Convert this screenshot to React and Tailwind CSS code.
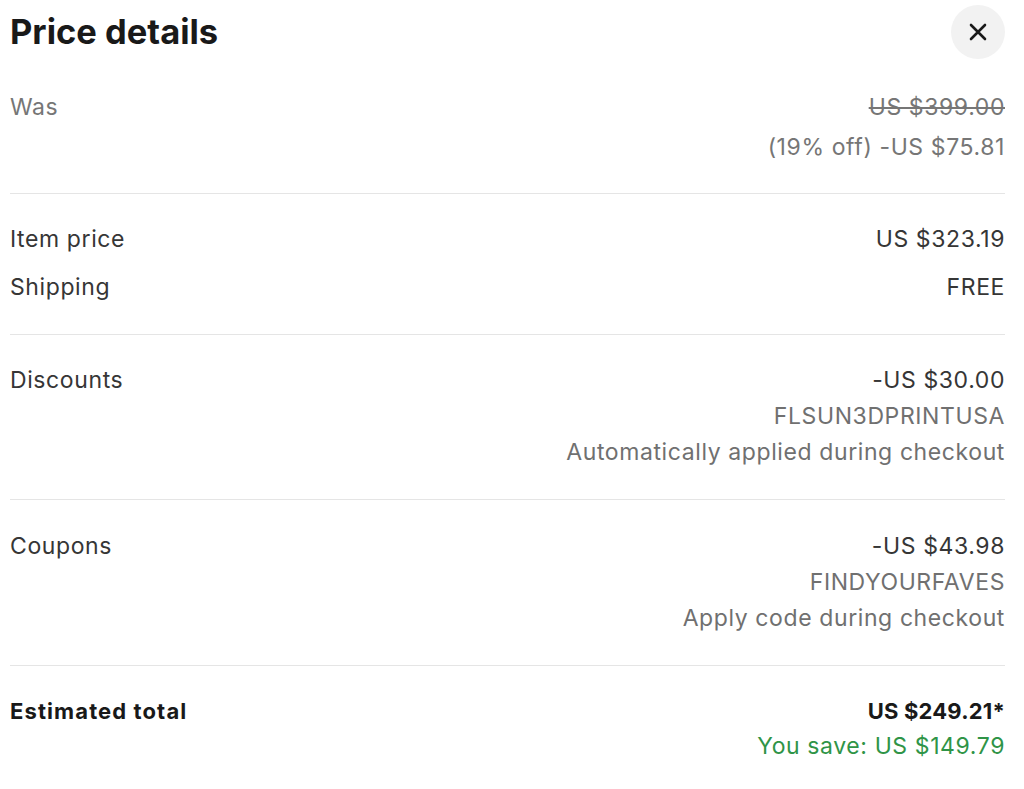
import React from "react";

function Divider() {
  return <div className="h-px bg-[#e5e5e5]" />;
}

export default function App() {
  return (
    <div className="bg-white w-[1024px] h-[789px] overflow-hidden pl-[10px] pr-[19px] text-[23px] tracking-[0.6px] leading-9 text-[#363636]" style={{ fontFamily: "Inter, 'Noto Sans', sans-serif" }}>
      <div className="h-16 flex items-center justify-between">
        <h1 className="text-[34.5px] tracking-normal font-bold text-[#191919] leading-none">Price details</h1>
        <button className="w-[54px] h-[54px] rounded-full bg-[#f2f2f2] flex items-center justify-center text-[#191919]">
          <svg width="18" height="18" viewBox="0 0 18 18" fill="none" stroke="currentColor" strokeWidth="2.6" strokeLinecap="round">
            <path d="M2 2L16 16M16 2L2 16" />
          </svg>
        </button>
      </div>

      <div className="pt-[25px] pb-[28px] flex justify-between">
        <div className="text-[#767676]">Was</div>
        <div className="flex flex-col items-end gap-1 text-[#767676]">
          <div className="line-through">US $399.00</div>
          <div>(19% off) -US $75.81</div>
        </div>
      </div>
      <Divider />

      <div className="pt-[27px] pb-[29px] flex flex-col gap-3">
        <div className="flex justify-between">
          <div>Item price</div>
          <div>US $323.19</div>
        </div>
        <div className="flex justify-between">
          <div>Shipping</div>
          <div>FREE</div>
        </div>
      </div>
      <Divider />

      <div className="pt-[27px] pb-[29px] flex justify-between">
        <div>Discounts</div>
        <div className="flex flex-col items-end">
          <div>-US $30.00</div>
          <div className="text-[#707070]">FLSUN3DPRINTUSA</div>
          <div className="text-[#707070]">Automatically applied during checkout</div>
        </div>
      </div>
      <Divider />

      <div className="pt-[28px] pb-[29px] flex justify-between">
        <div>Coupons</div>
        <div className="flex flex-col items-end">
          <div>-US $43.98</div>
          <div className="text-[#707070]">FINDYOURFAVES</div>
          <div className="text-[#707070]">Apply code during checkout</div>
        </div>
      </div>
      <Divider />

      <div className="pt-[27px] flex justify-between">
        <div className="font-bold text-[#191919] text-[22px] tracking-[1.1px]">Estimated total</div>
        <div className="flex flex-col items-end">
          <div className="font-bold text-[#191919] text-[22px] tracking-[0.2px]">US $249.21*</div>
          <div className="text-[#2f9447] -mt-[1px]">You save: US $149.79</div>
        </div>
      </div>
    </div>
  );
}
